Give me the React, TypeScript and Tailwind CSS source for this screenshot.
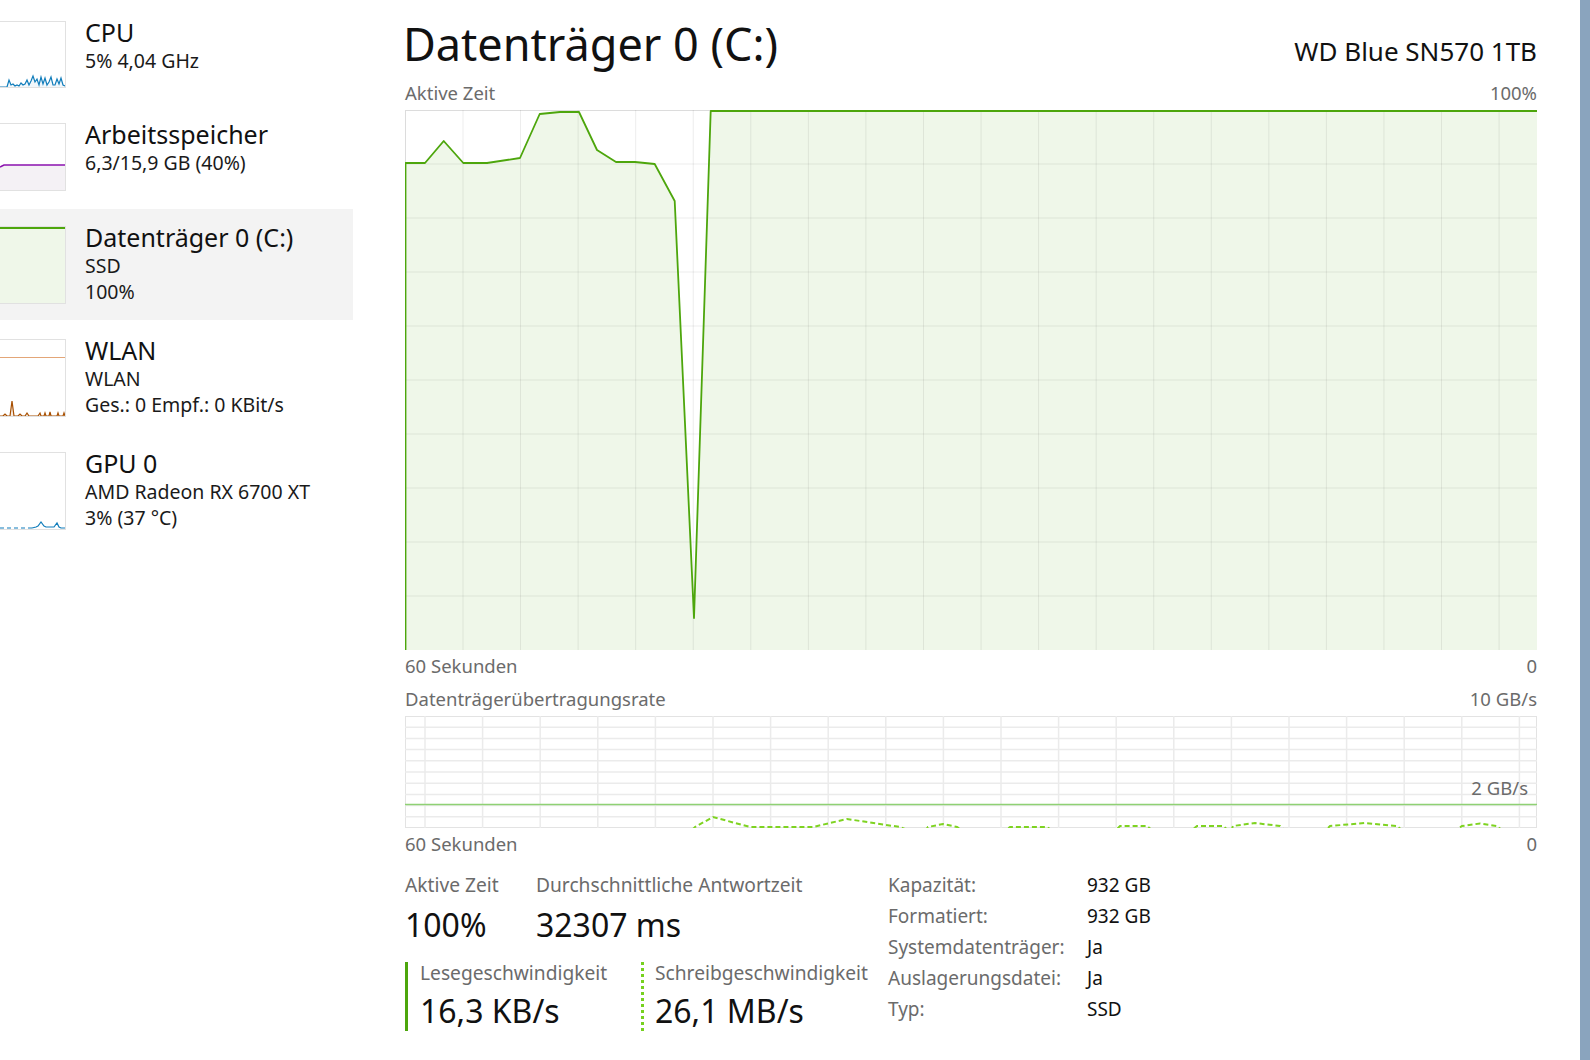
import React from "react";

const label = "text-[18.5px] leading-[22px] text-[#6b6b6b]";
const statLabel = "text-[19.2px] leading-[22px] text-[#6b6b6b]";

// upper graph: disk active time, svg coords (1132 x 540)
const activePts: [number, number][] = [
  [0.5, 53], [20, 53], [38.7, 31], [58.3, 53], [82, 53], [115, 48], [134.7, 4],
  [155, 2], [174, 2], [192, 40], [211, 52], [230, 52], [249.7, 54], [269.7, 91],
  [289, 508], [305.7, 1], [1132, 1],
];

const writePts =
  "0,115 286,115 290,111 308,101 345,111 408,111 442,103 495,111 505,115 520,115 523,111 538,108 552,111 558,115 600,115 605,111 642,111 648,115 710,115 715,110 742,110 748,115 786,115 792,110 818,110 824,115 826,115 828,110 850,107 875,110 880,115 920,115 925,110 960,107 992,110 998,115 1050,115 1057,110 1075,107.5 1092,110 1098,115 1132,115";

function ActiveGraph() {
  const w = 1132;
  const h = 540;
  const line = activePts.map((p) => p.join(",")).join(" ");
  const fill = `0.5,${h} ${line} ${w},${h}`;
  const vx = Array.from({ length: 19 }, (_, i) => 58 + i * 57.56);
  const hy = Array.from({ length: 9 }, (_, i) => 54 * (i + 1));
  return (
    <svg width={w} height={h} viewBox={`0 0 ${w} ${h}`} className="block">
      <rect x="0.5" y="0.5" width={w - 1} height={h - 1} fill="#fff" stroke="#dcdcdc" />
      <polygon points={fill} fill="#eff7e9" />
      {vx.map((x) => (
        <line key={x} x1={x} x2={x} y1={0} y2={h} stroke="#000" strokeOpacity="0.075" />
      ))}
      {hy.map((y) => (
        <line key={y} x1={0} x2={w} y1={y} y2={y} stroke="#000" strokeOpacity="0.075" />
      ))}
      <polyline points={`0.5,${h} ${line}`} fill="none" stroke="#4da60c" strokeWidth="1.8" strokeLinejoin="round" />
    </svg>
  );
}

function RateGraph() {
  const w = 1132;
  const h = 112;
  const vx = Array.from({ length: 20 }, (_, i) => 20 + i * 57.6);
  const hy = Array.from({ length: 9 }, (_, i) => 11.2 * (i + 1));
  return (
    <svg width={w} height={h} viewBox={`0 0 ${w} ${h}`} className="block">
      <rect x="0.5" y="0.5" width={w - 1} height={h - 1} fill="#fff" stroke="#e3e3e3" />
      {vx.map((x) => (
        <line key={x} x1={x} x2={x} y1={0} y2={h} stroke="#ebebeb" strokeWidth="1.5" />
      ))}
      {hy.map((y) => (
        <line key={y} x1={0} x2={w} y1={y} y2={y} stroke="#ebebeb" strokeWidth="1.5" />
      ))}
      <line x1={0} x2={w} y1={88.5} y2={88.5} stroke="#8fd174" strokeWidth="1.5" />
      <polyline points={writePts} fill="none" stroke="#7ed321" strokeWidth="2" strokeDasharray="5 3" />
    </svg>
  );
}

function Thumb({ h, children }: { h: number; children: React.ReactNode }) {
  return (
    <div
      className="w-[66px] shrink-0 overflow-hidden border-y border-r border-[#e1e1e1] bg-white"
      style={{ height: h }}
    >
      <svg width="65" height={h - 2} viewBox={`0 0 65 ${h - 2}`} className="block">
        {children}
      </svg>
    </div>
  );
}

const cpuPts =
  "0,65 7,65 9,58 11,63 13,62 15,64 17,63 19,64 21,61 23,63 25,62 27,58 29,63 31,59 33,54 35,60 37,57 39,63 41,55 43,62 45,56 47,63 49,60 51,55 53,63 55,63 57,57 59,62 61,56 63,63 65,64";
const wlanPts =
  "0,76 3,76 5,74 7,76 10,76 12,61 14,76 18,76 20,74 22,76 25,76 27,73 29,76 38,76 40,73 41,76 44,76 45,73 46,76 49,76 50,72 51,76 57,76 58,73 59,76 63,76 64,73 65,76";

function SideRow({
  thumb,
  h,
  title,
  lines,
  selected,
}: {
  thumb: React.ReactNode;
  h: number;
  title: string;
  lines: string[];
  selected?: boolean;
}) {
  return (
    <div className={`flex items-start gap-[19px] pt-[17px] pb-[16px] ${selected ? "bg-[#f3f3f3]" : ""}`}>
      <Thumb h={h}>{thumb}</Thumb>
      <div className="-mt-[5px] -mb-[10px] text-[#111]">
        <div className="text-[25px] leading-[32px]">{title}</div>
        {lines.map((l) => (
          <div key={l} className="text-[19.5px] leading-[26px] text-[#1a1a1a]">
            {l}
          </div>
        ))}
      </div>
    </div>
  );
}

export default function App() {
  return (
    <div className="flex h-[1060px] w-[1590px] overflow-hidden bg-white font-['Noto_Sans',sans-serif]">
      {/* sidebar */}
      <div className="flex w-[353px] shrink-0 flex-col gap-[2px] pt-[4px]">
        <SideRow
          h={67}
          title="CPU"
          lines={["5% 4,04 GHz"]}
          thumb={
            <>
              <polygon points={`0,65 ${cpuPts} 65,65`} fill="#f1f7fb" />
              <polyline points={cpuPts} fill="none" stroke="#117dbb" strokeWidth="1.2" />
            </>
          }
        />
        <SideRow
          h={68}
          title="Arbeitsspeicher"
          lines={["6,3/15,9 GB (40%)"]}
          thumb={
            <>
              <polygon points="0,43 2,42 4,41 65,41 65,66 0,66" fill="#f4f1f5" />
              <polyline points="0,43 2,42 4,41 65,41" fill="none" stroke="#8b12ae" strokeWidth="1.5" />
            </>
          }
        />
        <SideRow
          h={78}
          selected
          title="Datenträger 0 (C:)"
          lines={["SSD", "100%"]}
          thumb={
            <>
              <rect x="0" y="0" width="65" height="76" fill="#eff7e9" />
              <line x1="0" x2="65" y1="1" y2="1" stroke="#4da60c" strokeWidth="2" />
            </>
          }
        />
        <SideRow
          h={78}
          title="WLAN"
          lines={["WLAN", "Ges.: 0 Empf.: 0 KBit/s"]}
          thumb={
            <>
              <line x1="0" x2="65" y1="17.5" y2="17.5" stroke="#e3a678" strokeWidth="1" />
              <polygon points={`${wlanPts} 0,76`} fill="#f6ebe1" />
              <polyline points={wlanPts} fill="none" stroke="#a74f01" strokeWidth="1.2" />
            </>
          }
        />
        <SideRow
          h={78}
          title="GPU 0"
          lines={["AMD Radeon RX 6700 XT", "3% (37 °C)"]}
          thumb={
            <>
              <line x1="0" x2="32" y1="75" y2="75" stroke="#117dbb" strokeWidth="1.2" strokeDasharray="4 3" />
              <polyline
                points="32,75 36,74 38,73 41,69 44,73 46,74 54,74 57,70 59,74 61,75 65,75"
                fill="none"
                stroke="#117dbb"
                strokeWidth="1.2"
              />
            </>
          }
        />
      </div>

      {/* main pane */}
      <div className="w-[1184px] shrink-0 pl-[52px] text-[#111]">
        <div className="flex items-baseline justify-between pt-[18px]">
          <div className="-ml-[2px] text-[45px] leading-[52px]">Datenträger 0 (C:)</div>
          <div className="text-[26px]">WD Blue SN570 1TB</div>
        </div>

        <div className={`mt-[11px] flex justify-between ${label}`}>
          <span>Aktive Zeit</span>
          <span>100%</span>
        </div>
        <div className="mt-[6px]">
          <ActiveGraph />
        </div>
        <div className={`mt-[5px] flex justify-between ${label}`}>
          <span>60 Sekunden</span>
          <span>0</span>
        </div>

        <div className={`mt-[11px] flex justify-between ${label}`}>
          <span>Datenträgerübertragungsrate</span>
          <span>10 GB/s</span>
        </div>
        <div className="relative mt-[6px]">
          <RateGraph />
          <span className={`absolute right-[9px] top-[61px] ${label}`}>2 GB/s</span>
        </div>
        <div className={`mt-[5px] flex justify-between ${label}`}>
          <span>60 Sekunden</span>
          <span>0</span>
        </div>

        {/* stats */}
        <div className="mt-[15px] flex items-start">
          <div className="w-[483px] shrink-0 pt-[4px]">
            <div className="flex">
              <div className="w-[131px]">
                <div className={statLabel}>Aktive Zeit</div>
                <div className="mt-[9px] text-[32px] leading-[40px]">100%</div>
              </div>
              <div>
                <div className={statLabel}>Durchschnittliche Antwortzeit</div>
                <div className="mt-[9px] text-[32px] leading-[40px]">32307 ms</div>
              </div>
            </div>
            <div className="mt-[17px] flex">
              <div className="w-[236px] border-l-[3px] border-[#4da60c] pl-[12px]">
                <div className={statLabel}>Lesegeschwindigkeit</div>
                <div className="mt-[7px] text-[32px] leading-[40px]">16,3 KB/s</div>
              </div>
              <div className="border-l-[3px] border-dotted border-[#76d11f] pl-[11px]">
                <div className={statLabel}>Schreibgeschwindigkeit</div>
                <div className="mt-[7px] text-[32px] leading-[40px]">26,1 MB/s</div>
              </div>
            </div>
          </div>
          <div className="grid grid-cols-[199px_auto] content-start text-[19px] leading-[31px]">
            <span className="text-[#6b6b6b]">Kapazität:</span>
            <span>932 GB</span>
            <span className="text-[#6b6b6b]">Formatiert:</span>
            <span>932 GB</span>
            <span className="text-[#6b6b6b]">Systemdatenträger:</span>
            <span>Ja</span>
            <span className="text-[#6b6b6b]">Auslagerungsdatei:</span>
            <span>Ja</span>
            <span className="text-[#6b6b6b]">Typ:</span>
            <span>SSD</span>
          </div>
        </div>
      </div>

      <div className="flex-1" />
      <div className="w-[10px] shrink-0 bg-[#8aa4be]" />
    </div>
  );
}
